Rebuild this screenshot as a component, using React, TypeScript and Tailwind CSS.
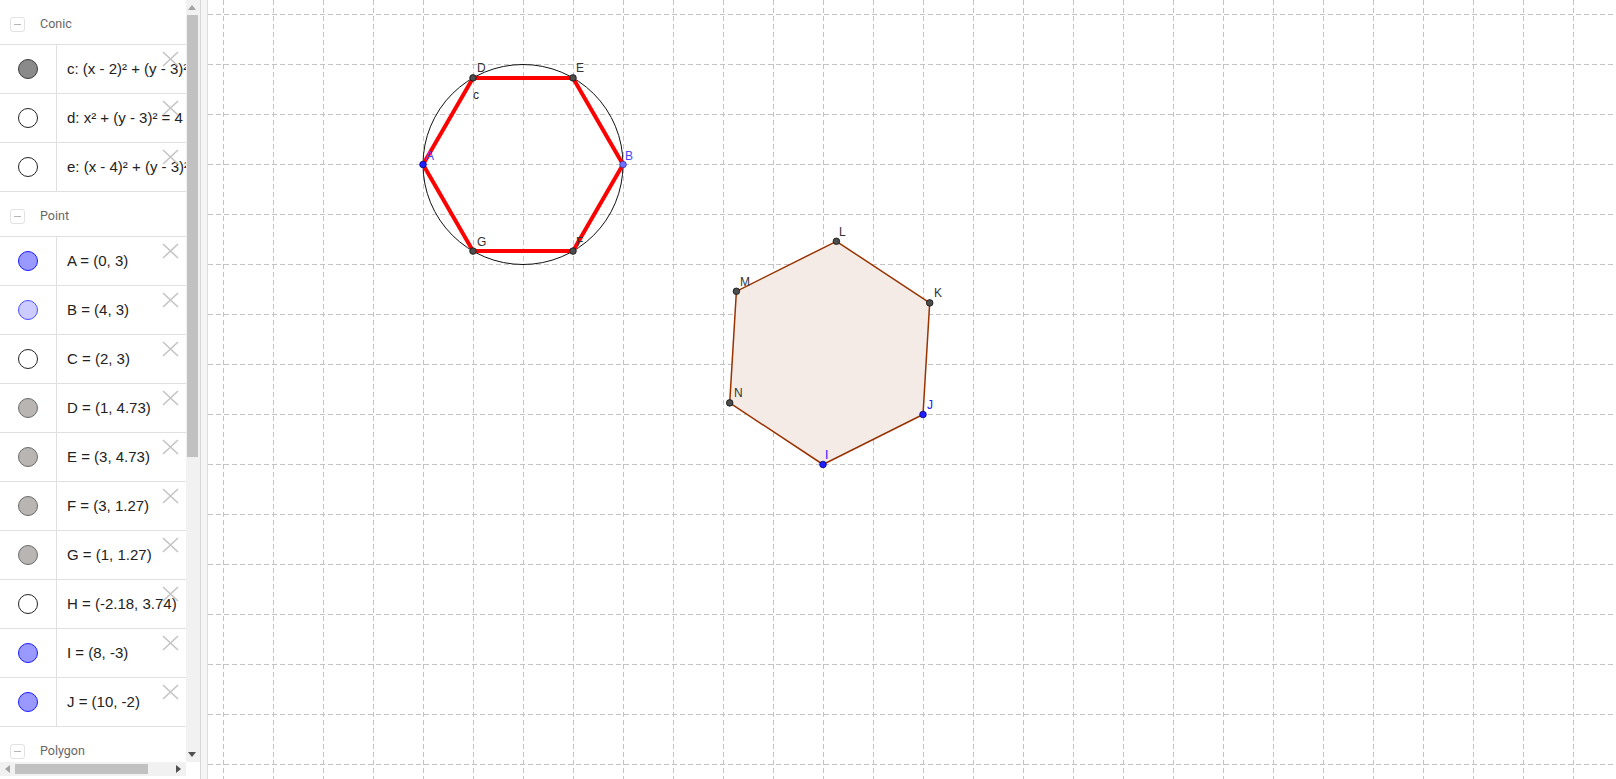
import React from 'react'

type Item = {
  text: string
  marble: string
}

const conics: Item[] = [
  { text: 'c: (x - 2)² + (y - 3)² = 4', marble: 'bg-[#8a8a8a] border-[#3a3a3a]' },
  { text: 'd: x² + (y - 3)² = 4', marble: 'bg-white border-[#222]' },
  { text: 'e: (x - 4)² + (y - 3)² = 4', marble: 'bg-white border-[#222]' },
]

const points: Item[] = [
  { text: 'A = (0, 3)', marble: 'bg-[#9999ff] border-[#1a1aff]' },
  { text: 'B = (4, 3)', marble: 'bg-[#ccccff] border-[#4d4dff]' },
  { text: 'C = (2, 3)', marble: 'bg-white border-[#222]' },
  { text: 'D = (1, 4.73)', marble: 'bg-[#b8b5b2] border-[#6a6a6a]' },
  { text: 'E = (3, 4.73)', marble: 'bg-[#b8b5b2] border-[#6a6a6a]' },
  { text: 'F = (3, 1.27)', marble: 'bg-[#b8b5b2] border-[#6a6a6a]' },
  { text: 'G = (1, 1.27)', marble: 'bg-[#b8b5b2] border-[#6a6a6a]' },
  { text: 'H = (-2.18, 3.74)', marble: 'bg-white border-[#222]' },
  { text: 'I = (8, -3)', marble: 'bg-[#9999ff] border-[#1a1aff]' },
  { text: 'J = (10, -2)', marble: 'bg-[#9999ff] border-[#1a1aff]' },
]

function Header({ label }: { label: string }) {
  return (
    <div className="flex h-[45px] shrink-0 items-center gap-[15px] border-b border-[#e0e0e0] pl-[10px] pt-1">
      <div className="flex h-[15px] w-[15px] items-center justify-center rounded-[3px] border border-[#e2e2e2]">
        <div className="h-px w-[7px] bg-[#b5b5b5]" />
      </div>
      <span className="text-[12.5px] text-[#666]" style={{ fontFamily: 'Roboto, "Noto Sans", sans-serif' }}>
        {label}
      </span>
    </div>
  )
}

function Row({ item }: { item: Item }) {
  return (
    <div className="relative flex h-[49px] shrink-0 border-b border-[#e0e0e0]">
      <div className="flex w-[57px] shrink-0 items-center justify-center border-r border-[#e0e0e0]">
        <div className={`h-[20px] w-[20px] rounded-full border ${item.marble}`} />
      </div>
      <div
        className="flex min-w-0 flex-1 items-center overflow-hidden whitespace-nowrap pl-[10px] text-[15px] text-[#222]"
        style={{ fontFamily: '"Liberation Sans", Arial, sans-serif' }}
      >
        {item.text}
      </div>
      <svg className="absolute right-[7px] top-[6px]" width="17" height="16" viewBox="0 0 17 16">
        <path d="M1 1 L16 15 M16 1 L1 15" stroke="#c4c4c4" strokeWidth="1.6" fill="none" />
      </svg>
    </div>
  )
}

function Algebra() {
  return (
    <div className="flex w-[201px] shrink-0 flex-col border-r border-[#d6d6d6] bg-white">
      <div className="flex h-[762px]">
        <div className="flex w-[186px] flex-col overflow-hidden">
          <Header label="Conic" />
          {conics.map((c) => (
            <Row key={c.text} item={c} />
          ))}
          <Header label="Point" />
          {points.map((p) => (
            <Row key={p.text} item={p} />
          ))}
          <Header label="Polygon" />
        </div>
        <div className="flex w-[14px] flex-col bg-[#f1f1f1]">
          <div className="flex h-[15px] items-center justify-center pr-[2px]">
            <div className="h-0 w-0 border-x-[4px] border-b-[5px] border-x-transparent border-b-[#a3a3a3]" />
          </div>
          <div className="ml-px h-[442px] w-[11px] bg-[#c1c1c1]" />
          <div className="flex-1" />
          <div className="flex h-[15px] items-center justify-center pr-[2px]">
            <div className="h-0 w-0 border-x-[4px] border-t-[5px] border-x-transparent border-t-[#505050]" />
          </div>
        </div>
      </div>
      <div className="flex h-[14px]">
        <div className="flex w-[186px] items-center bg-[#f1f1f1]">
          <div className="flex w-[15px] items-center justify-center">
            <div className="h-0 w-0 border-y-[4px] border-r-[5px] border-y-transparent border-r-[#a3a3a3]" />
          </div>
          <div className="h-[10px] w-[133px] bg-[#c1c1c1]" />
          <div className="flex-1" />
          <div className="flex w-[16px] items-center justify-center">
            <div className="h-0 w-0 border-y-[4px] border-l-[5px] border-y-transparent border-l-[#505050]" />
          </div>
        </div>
        <div className="flex-1 bg-white" />
      </div>
    </div>
  )
}

const X0 = 423
const Y0 = 314.5
const U = 50
const px = (x: number, y: number) => [X0 + x * U, Y0 - y * U] as const

function Graphics() {
  const vLines: number[] = []
  for (let x = 223.5; x < 1616; x += 50) vLines.push(x)
  const hLines: number[] = []
  for (let y = 14.5; y < 779; y += 50) hLines.push(y)

  const A = px(0, 3)
  const B = px(4, 3)
  const D = px(1, 4.732)
  const E = px(3, 4.732)
  const F = px(3, 1.268)
  const G = px(1, 1.268)
  const I = px(8, -3)
  const J = px(10, -2)
  const K = px(10.134, 0.232)
  const L = px(8.268, 1.464)
  const M = px(6.268, 0.464)
  const N = px(6.134, -1.768)

  const pts = (arr: (readonly [number, number])[]) => arr.map((p) => p.join(',')).join(' ')

  const gray = [D, E, F, G, K, L, M, N]
  const blue = [A, I, J]

  const labels: { t: string; x: number; y: number; c: string }[] = [
    { t: 'D', x: 477, y: 72, c: '#333' },
    { t: 'E', x: 576, y: 72, c: '#333' },
    { t: 'c', x: 473, y: 99, c: '#222' },
    { t: 'A', x: 426, y: 160, c: '#4646ff' },
    { t: 'B', x: 625, y: 160, c: '#4646ff' },
    { t: 'G', x: 477, y: 246, c: '#333' },
    { t: 'F', x: 576, y: 246, c: '#333' },
    { t: 'L', x: 839, y: 236, c: '#333' },
    { t: 'M', x: 740, y: 286, c: '#333' },
    { t: 'K', x: 934, y: 297, c: '#333' },
    { t: 'N', x: 734, y: 397, c: '#333' },
    { t: 'J', x: 927, y: 409, c: '#2020ff' },
    { t: 'I', x: 825, y: 459, c: '#2020ff' },
  ]

  return (
    <div className="flex-1 overflow-hidden bg-white">
      <svg width="1408" height="779" viewBox="208 0 1408 779" className="block">
        <g stroke="#c3c3c3" strokeWidth="1" strokeDasharray="5 3">
          {vLines.map((x) => (
            <line key={`v${x}`} x1={x} y1={0} x2={x} y2={779} />
          ))}
          {hLines.map((y) => (
            <line key={`h${y}`} x1={208} y1={y} x2={1616} y2={y} />
          ))}
        </g>

        <polygon points={pts([I, J, K, L, M, N])} fill="#f4ebe6" stroke="#993300" strokeWidth="1.5" strokeLinejoin="round" />

        <circle cx={523} cy={164.5} r={100} fill="none" stroke="#111" strokeWidth="1" />

        <polygon points={pts([A, D, E, B, F, G])} fill="none" stroke="#ff0000" strokeWidth="4" strokeLinejoin="round" />

        {gray.map(([x, y], i) => (
          <circle key={`g${i}`} cx={x} cy={y} r={3.3} fill="#4d4d4d" stroke="#111" strokeWidth="0.8" />
        ))}
        {blue.map(([x, y], i) => (
          <circle key={`b${i}`} cx={x} cy={y} r={3.3} fill="#1f1fff" stroke="#00007a" strokeWidth="0.8" />
        ))}
        <circle cx={B[0]} cy={B[1]} r={3.3} fill="#6f6fff" stroke="#333399" strokeWidth="0.8" />

        <g style={{ fontFamily: '"Liberation Sans", Arial, sans-serif' }} fontSize="12">
          {labels.map((l) => (
            <text key={l.t} x={l.x} y={l.y} fill={l.c}>
              {l.t}
            </text>
          ))}
        </g>
      </svg>
    </div>
  )
}

export default function App() {
  return (
    <div className="flex h-[779px] w-[1616px] overflow-hidden bg-white">
      <Algebra />
      <div className="w-[7px] shrink-0 border-r border-[#dcdcdc] bg-[#f5f5f5]" />
      <Graphics />
    </div>
  )
}
